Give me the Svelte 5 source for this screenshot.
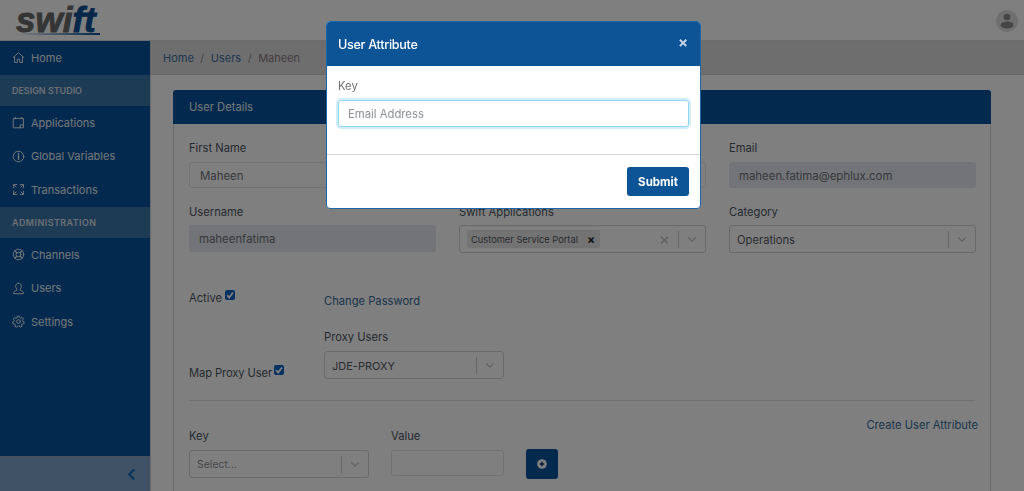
<script>
	const navTop = [{ label: "Home", icon: "home" }];
	const design = [
		{ label: "Applications", icon: "apps" },
		{ label: "Global Variables", icon: "info" },
		{ label: "Transactions", icon: "expand" }
	];
	const admin = [
		{ label: "Channels", icon: "ring" },
		{ label: "Users", icon: "user" },
		{ label: "Settings", icon: "gear" }
	];
</script>

{#snippet icon(name)}
	<svg class="nav-icon" viewBox="0 0 16 16" fill="none" stroke="currentColor" stroke-width="1.2" stroke-linecap="round" stroke-linejoin="round">
		{#if name === "home"}
			<path d="M1.5 8 8 2l6.500 6M3.200 6.800V14h3.300v-4h3v4h3.300V6.800" />
		{:else if name === "apps"}
			<path d="M4 1.500v2M12 1.500v2M2 3h12v11.500H2zM10 14.500V11h4" />
		{:else if name === "info"}
			<circle cx="8" cy="8" r="6.500" />
			<path d="M8 7.200V11.500" stroke-width="1.800" />
			<path d="M8 4.300v.8" stroke-width="1.800" />
		{:else if name === "expand"}
			<path d="M2 6V2h4M10 2h4v4M14 10v4h-4M6 14H2v-4M2 2l3 3M14 2l-3 3M14 14l-3-3M2 14l3-3" />
		{:else if name === "ring"}
			<circle cx="8" cy="8" r="6.500" />
			<circle cx="8" cy="8" r="3" />
			<path d="M3.500 3.500 6 6M12.500 3.500 10 6M3.500 12.500 6 10M12.500 12.500 10 10" stroke-width="1.600" />
		{:else if name === "user"}
			<path d="M8 1.500c-2.300 0-3.500 1.700-3.500 3.700 0 1.500.6 2.800 1.500 3.500v1.500c-1.800.6-4 1.300-4 3.300v.9h12v-.9c0-2-2.200-2.700-4-3.300V8.700c.9-.7 1.500-2 1.500-3.500 0-2-1.200-3.700-3.500-3.700z" />
		{:else}
			<circle cx="8" cy="8" r="2.300" />
			<path d="M6.800 1.500h2.400l.4 1.900 1.300.6 1.700-1 1.500 1.900-1.200 1.500.3 1.400 1.800.8-.5 2.300-1.900.1-.9 1.100.4 1.900-2.200 1-1.200-1.500H7.100l-1.200 1.500-2.200-1 .4-1.900-.9-1.100-1.900-.1-.5-2.300 1.800-.8.3-1.400L1.700 4.900l1.500-1.900 1.700 1 1.300-.6z" />
		{/if}
	</svg>
{/snippet}

{#snippet chevron()}
	<svg class="chev" viewBox="0 0 12 8" fill="none" stroke="currentColor" stroke-width="1.400"><path d="M1.500 1.500 6 6l4.500-4.500" /></svg>
{/snippet}

{#snippet check()}
	<span class="check">
		<svg viewBox="0 0 10 10" fill="none" stroke="#fff" stroke-width="1.800"><path d="M2 5.200 4.200 7.500 8 2.500" /></svg>
	</span>
{/snippet}

<div class="page">
	<header class="topbar">
		<div class="logo">
			<span class="logo-word"><span class="dark">swi</span><span class="blue">ft</span></span>
			<span class="logo-line"></span>
		</div>
		<div class="avatar">
			<svg viewBox="0 0 22 22" fill="#8a8a8a"><circle cx="11" cy="7" r="3.300" /><ellipse cx="11" cy="15" rx="6.500" ry="3.400" /></svg>
		</div>
	</header>

	<div class="shell">
		<aside class="sidebar">
			<nav class="nav">
				{#each navTop as item}
					<div class="nav-item">{@render icon(item.icon)}<span>{item.label}</span></div>
				{/each}
				<div class="nav-section">DESIGN STUDIO</div>
				{#each design as item}
					<div class="nav-item">{@render icon(item.icon)}<span>{item.label}</span></div>
				{/each}
				<div class="nav-section wide">ADMINISTRATION</div>
				{#each admin as item}
					<div class="nav-item">{@render icon(item.icon)}<span>{item.label}</span></div>
				{/each}
			</nav>
			<div class="collapse">
				<svg viewBox="0 0 10 14" fill="none" stroke="#1a6ab8" stroke-width="2.400"><path d="M8 1.500 2.500 7 8 12.500" /></svg>
			</div>
		</aside>

		<main class="main">
			<div class="crumbs">
				<span>Home</span><i>/</i><span>Users</span><i>/</i><span class="current">Maheen</span>
			</div>

			<section class="card">
				<div class="card-head">User Details</div>
				<div class="card-body">
					<div class="grid">
						<div class="field">
							<label>First Name</label>
							<div class="input plain">Maheen</div>
						</div>
						<div class="field">
							<label>Last Name</label>
							<div class="input plain">Fatima</div>
						</div>
						<div class="field">
							<label>Email</label>
							<div class="input filled">maheen.fatima@ephlux.com</div>
						</div>
						<div class="field tight">
							<label>Username</label>
							<div class="input filled tall">maheenfatima</div>
						</div>
						<div class="field tight">
							<label>Swift Applications</label>
							<div class="select">
								<span class="tag">Customer Service Portal<b>×</b></span>
								<span class="clear">×</span>
								<span class="sep"></span>
								{@render chevron()}
							</div>
						</div>
						<div class="field tight">
							<label>Category</label>
							<div class="select">
								<span class="value">Operations</span>
								<span class="sep"></span>
								{@render chevron()}
							</div>
						</div>
					</div>

					<div class="flags">
						<div class="flag-col">
							<div class="flag active"><span>Active</span>{@render check()}</div>
							<div class="flag map"><span>Map Proxy User</span>{@render check()}</div>
						</div>
						<div class="proxy-col">
							<div class="link">Change Password</div>
							<label>Proxy Users</label>
							<div class="select proxy">
								<span class="value small-value">JDE-PROXY</span>
								<span class="sep"></span>
								{@render chevron()}
							</div>
						</div>
					</div>

					<div class="rule"></div>

					<div class="attrs">
						<div class="field key">
							<label>Key</label>
							<div class="select">
								<span class="value muted">Select...</span>
								<span class="sep"></span>
								{@render chevron()}
							</div>
						</div>
						<div class="field val">
							<label>Value</label>
							<div class="input plain"></div>
						</div>
						<button class="add" aria-label="Add">
							<svg viewBox="0 0 10 10"><circle cx="5" cy="5" r="4.800" fill="#fff" /><path d="M5 2.800v4.400M2.800 5h4.400" stroke="#05305a" stroke-width="1.400" /></svg>
						</button>
						<div class="link create">Create User Attribute</div>
					</div>
				</div>
			</section>
		</main>
	</div>
</div>

<div class="backdrop"></div>

<div class="modal">
	<div class="modal-head">
		<span>User Attribute</span>
		<span class="close">×</span>
	</div>
	<div class="modal-body">
		<label>Key</label>
		<div class="modal-input">Email Address</div>
	</div>
	<div class="modal-foot">
		<button class="submit">Submit</button>
	</div>
</div>

<style>
	:global(body) {
		margin: 0;
		background: #fff;
		overflow: hidden;
	}
	.page {
		width: 1024px;
		height: 491px;
		overflow: hidden;
		font-family: Inter, "Open Sans", sans-serif;
		font-size: 11.200px;
		color: #4d5560;
	}
	.topbar {
		height: 41px;
		box-sizing: border-box;
		display: flex;
		justify-content: space-between;
		align-items: flex-start;
		padding: 0 6px 0 16px;
		background: #fff;
		border-bottom: 1px solid #d8d8d8;
	}
	.logo {
		display: flex;
		flex-direction: column;
		width: 84px;
	}
	.logo-word {
		display: block;
		font-family: "Liberation Sans", sans-serif;
		font-weight: 700;
		font-style: italic;
		font-size: 35px;
		line-height: 40px;
		height: 40px;
		white-space: nowrap;
		-webkit-text-stroke: 0.9px currentColor;
	}
	.dark {
		color: #6b6b6b;
	}
	.blue {
		color: #0a4f95;
	}
	.logo-line {
		height: 2px;
		margin-top: -7px;
		background: linear-gradient(90deg, #fff, #0a4f95);
	}
	.avatar {
		width: 22px;
		height: 22px;
		margin-top: 10px;
		border-radius: 50%;
		background: #dedede;
	}
	.avatar svg {
		display: block;
	}
	.shell {
		display: flex;
		height: 450px;
	}
	.sidebar {
		width: 150px;
		flex: none;
		display: flex;
		flex-direction: column;
		justify-content: space-between;
		background: #06539d;
		border-right: 1px solid #d0d0d0;
		color: #fff;
	}
	.nav-item {
		height: 33.700px;
		display: flex;
		align-items: center;
		gap: 6px;
		padding-left: 12px;
		font-size: 11px;
		color: #e8edf2;
	}
	.nav-icon {
		width: 13px;
		height: 13px;
		flex: none;
	}
	.nav-section {
		height: 31px;
		display: flex;
		align-items: center;
		padding-left: 12px;
		background: #3c76ad;
		font-size: 8.950px;
		font-weight: 600;
		color: #d5dee8;
	}
	.wide {
		letter-spacing: 0.45px;
	}
	.collapse {
		height: 35px;
		background: #7ea4cc;
		border-top: 1px solid #8aa3bb;
		box-sizing: border-box;
		display: flex;
		align-items: center;
		justify-content: flex-end;
		padding-right: 14px;
	}
	.collapse svg {
		width: 9px;
		height: 13px;
	}
	.main {
		flex: 1;
		min-width: 0;
		background: #fff;
		overflow: hidden;
	}
	.crumbs {
		height: 34px;
		box-sizing: border-box;
		display: flex;
		align-items: center;
		gap: 6.500px;
		padding-left: 12px;
		background: #dcdcdc;
		border-bottom: 1px solid #d0d0d0;
		font-size: 11px;
		color: #3f6f9e;
	}
	.crumbs i {
		font-style: normal;
		color: #888;
	}
	.crumbs .current {
		color: #8a7a82;
	}
	.card {
		margin: 15px 33px 0 22px;
		border: 1px solid #d6d6d6;
		border-radius: 3px 3px 0 0;
	}
	.card-head {
		height: 34px;
		margin: -1px -1px 0;
		padding-left: 16px;
		display: flex;
		align-items: center;
		background: #06539d;
		border-radius: 3px 3px 0 0;
		color: #e8edf2;
		font-size: 11.200px;
	}
	.card-body {
		padding: 16px 15px 40px;
	}
	.grid {
		display: grid;
		grid-template-columns: repeat(3, 247px);
		column-gap: 23px;
		row-gap: 16px;
	}
	.field {
		display: flex;
		flex-direction: column;
		gap: 6px;
	}
	.tight {
		gap: 5px;
	}
	label {
		font-size: 11.200px;
		line-height: 16px;
		color: #4d5560;
	}
	.input {
		height: 26px;
		box-sizing: border-box;
		display: flex;
		align-items: center;
		padding: 1px 0 0 10px;
		border-radius: 3px;
		font-size: 11.400px;
		color: #6e7278;
	}
	.tall {
		height: 27px;
	}
	.plain {
		border: 1px solid #e4e6ea;
		background: #fff;
	}
	.filled {
		background: #e6e9ee;
	}
	.select {
		height: 28px;
		box-sizing: border-box;
		display: flex;
		align-items: center;
		padding: 0 8px 0 7px;
		border: 1px solid #d4d4d4;
		border-radius: 3px;
		background: #fff;
	}
	.value {
		flex: 1;
		padding-top: 1px;
		color: #55595f;
		font-size: 11.200px;
	}
	.small-value {
		font-size: 11px;
	}
	.value.muted {
		color: #8a8e94;
		font-size: 10.500px;
	}
	.tag {
		display: flex;
		align-items: center;
		gap: 9px;
		height: 18px;
		padding: 0 5px 0 4px;
		margin-right: auto;
		background: #e6e6e6;
		border-radius: 2px;
		font-size: 9.300px;
		color: #55595f;
	}
	.tag b {
		font-size: 12px;
		color: #222;
	}
	.clear {
		font-size: 17px;
		line-height: 1;
		color: #c0c0c0;
		margin-right: 8px;
	}
	.sep {
		width: 1px;
		height: 17px;
		background: #cfcfcf;
		margin-right: 8px;
	}
	.chev {
		width: 10px;
		height: 7px;
		flex: none;
		color: #c0c0c0;
	}
	.flags {
		display: flex;
		height: 147px;
	}
	.flag-col {
		width: 135px;
	}
	.flag {
		display: flex;
		align-items: flex-start;
		gap: 3px;
		line-height: 16px;
	}
	.active {
		margin-top: 37px;
	}
	.map {
		margin-top: 59px;
		gap: 2px;
		letter-spacing: -0.1px;
	}
	.check {
		width: 10px;
		height: 10px;
		border-radius: 2px;
		background: #0a62c4;
		display: block;
	}
	.check svg {
		display: block;
	}
	.proxy-col {
		padding-top: 40px;
	}
	.link {
		font-size: 11.200px;
		line-height: 16px;
		color: #3a6a96;
	}
	.proxy-col label {
		display: block;
		margin-top: 20px;
	}
	.proxy {
		width: 180px;
		margin-top: 6px;
	}
	.rule {
		height: 1px;
		background: #dedede;
	}
	.attrs {
		position: relative;
		display: flex;
		align-items: flex-start;
		margin-top: 27px;
	}
	.key {
		width: 180px;
	}
	.val {
		width: 113px;
		margin-left: 22px;
	}
	.add {
		width: 32px;
		height: 30px;
		margin: 21px 0 0 22px;
		padding: 0;
		display: flex;
		align-items: center;
		justify-content: center;
		background: #06539d;
		border: 0;
		border-radius: 3px;
	}
	.add svg {
		width: 10px;
		height: 10px;
	}
	.create {
		position: absolute;
		right: -3px;
		top: -11px;
	}
	.backdrop {
		position: fixed;
		inset: 0;
		background: rgba(0, 0, 0, 0.5);
	}
	.modal {
		position: fixed;
		left: 326px;
		top: 21px;
		width: 375px;
		height: 188px;
		background: #fff;
		border-radius: 4px;
		border: 1px solid #1f66a8;
		box-sizing: border-box;
		font-family: Inter, "Open Sans", sans-serif;
		overflow: hidden;
	}
	.modal-head {
		height: 44px;
		display: flex;
		align-items: center;
		justify-content: space-between;
		padding: 0 12px 0 11px;
		background: #0d5496;
		color: #fff;
		font-size: 12.600px;
		letter-spacing: -0.3px;
		font-weight: 500;
	}
	.close {
		font-size: 15px;
		font-weight: 700;
		color: #c3d2e2;
		margin-bottom: 4px;
	}
	.modal-body {
		height: 89px;
		box-sizing: border-box;
		padding: 12px 11px 0;
		border-bottom: 1px solid #d5d8dc;
	}
	.modal-body label {
		display: block;
		color: #6d6d6d;
	}
	.modal-input {
		height: 27px;
		box-sizing: border-box;
		margin-top: 6px;
		padding-left: 9px;
		display: flex;
		align-items: center;
		border: 1px solid #8fd6f4;
		box-shadow: 0 0 0 2px #d2eefb;
		border-radius: 3px;
		font-size: 11.300px;
		color: #8d9096;
	}
	.modal-foot {
		display: flex;
		justify-content: flex-end;
		padding: 12px 11px;
	}
	.submit {
		width: 62px;
		height: 29px;
		background: #0d5496;
		border: 0;
		border-radius: 3px;
		color: #fff;
		font-family: inherit;
		font-size: 11.500px;
		font-weight: 700;
	}
</style>
